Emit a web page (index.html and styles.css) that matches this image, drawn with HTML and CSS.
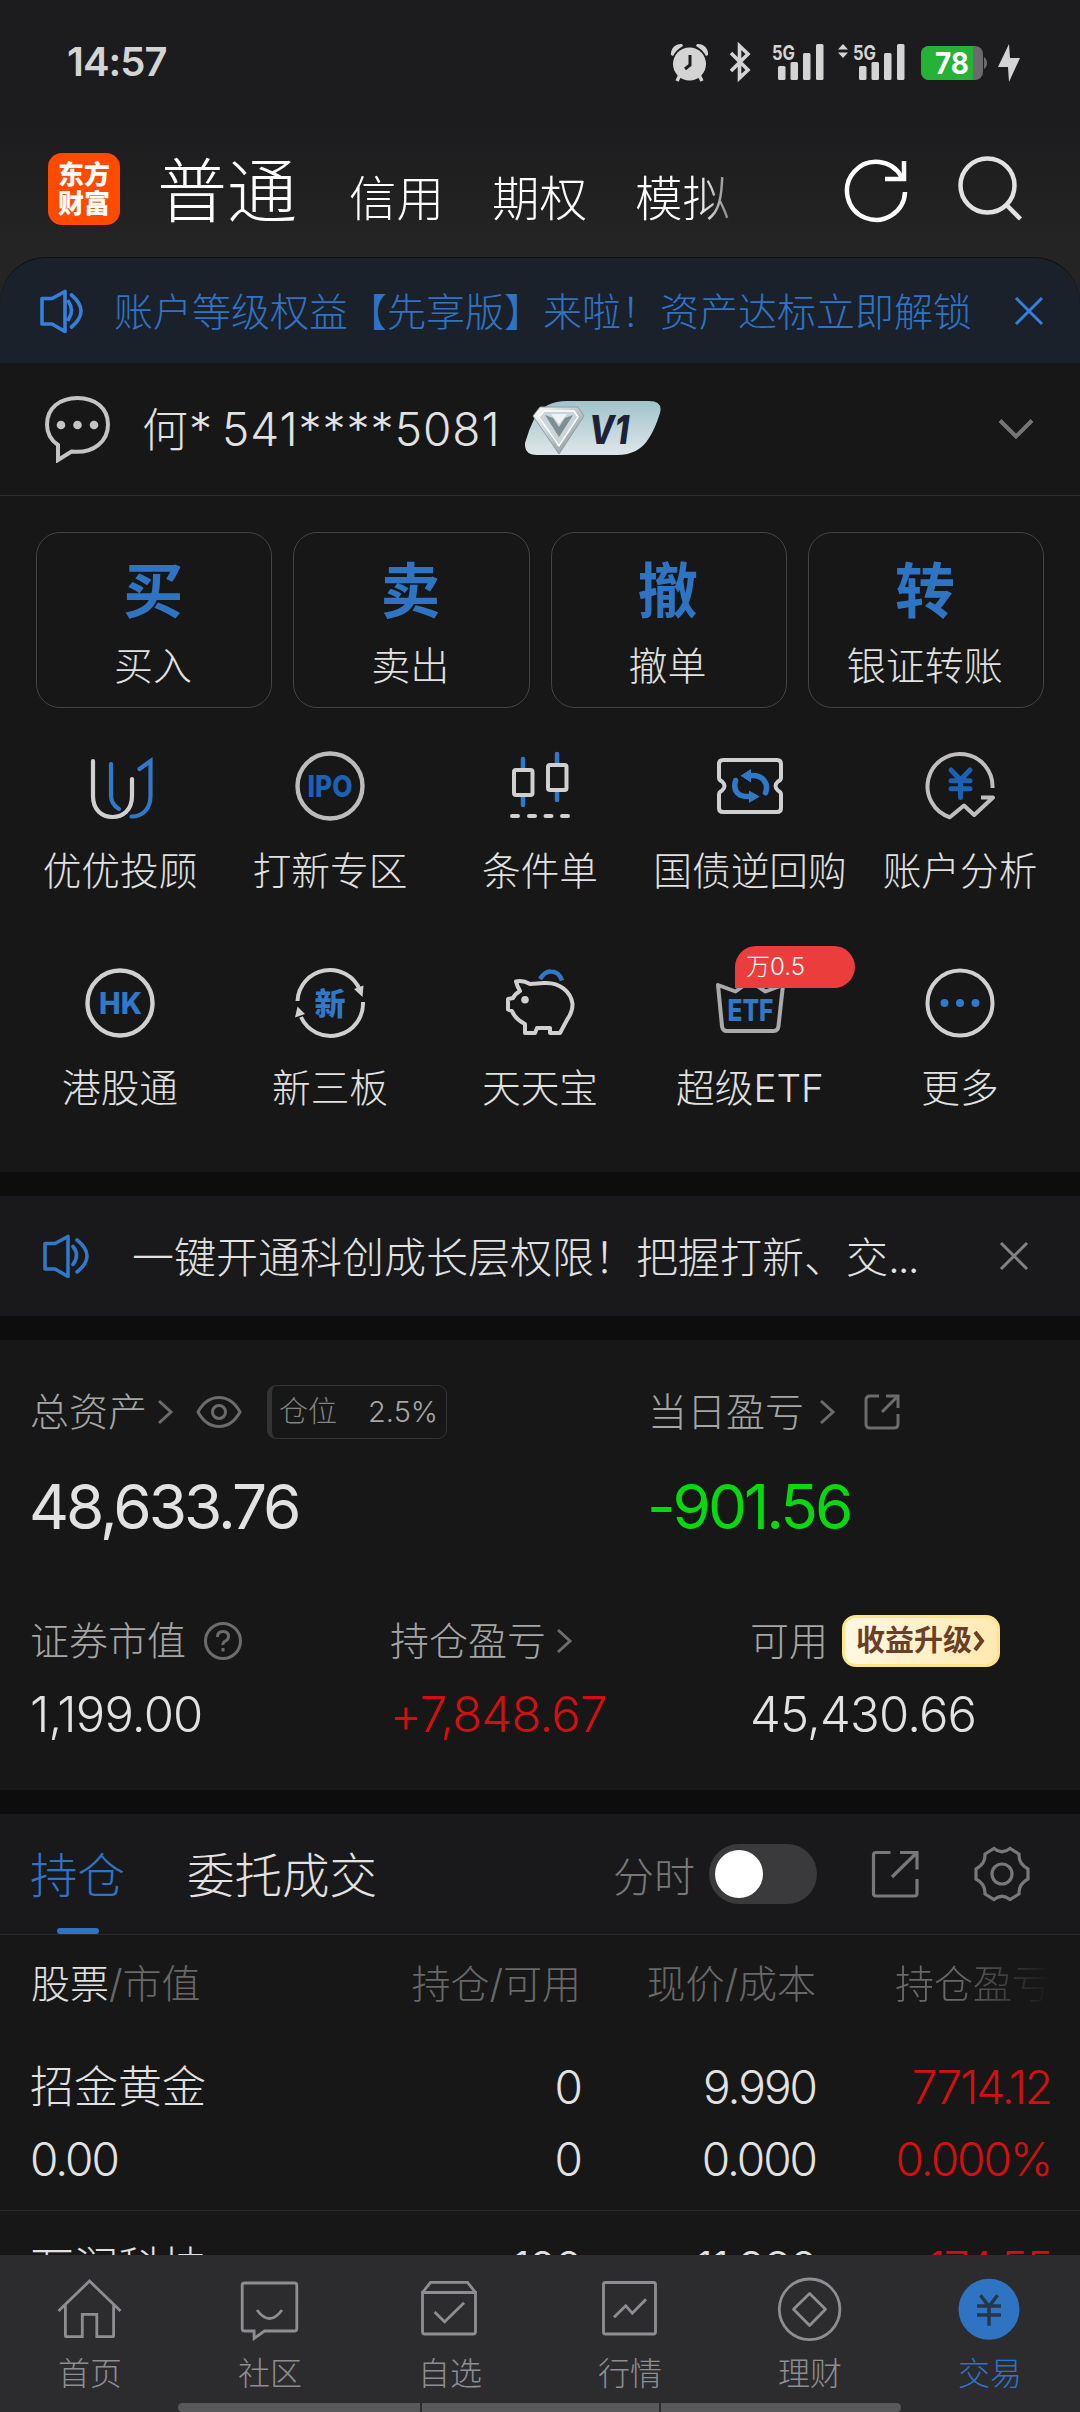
FILE: index.html
```html
<!DOCTYPE html>
<html lang="zh-CN">
<head>
<meta charset="utf-8">
<title>交易</title>
<link rel="stylesheet" href="styles.css">
</head>
<body>
<div class="screen">
  <div class="top">
    <div class="statusbar">
      <span class="time">14:57</span>
      <svg class="st-icons" width="352" height="44" viewBox="670 41 352 44">
        <g fill="#d4d4d4">
          <circle cx="689.500" cy="64" r="16.500"/>
          <path d="M671 55a10 10 0 0 1 11-11l1 2a24 24 0 0 0-10 10zM708 55a10 10 0 0 0-11-11l-1 2a24 24 0 0 1 10 10z"/>
          <path d="M680 75l-3 6M699 75l3 6" stroke="#d4d4d4" stroke-width="3.500"/>
        </g>
        <path d="M690 55v10l-5 4" fill="none" stroke="#1c1c1e" stroke-width="3"/>
        <path d="M731 53l17 17-8.500 8V46l8.500 8-17 17" fill="none" stroke="#d4d4d4" stroke-width="3.600"/>
        <g fill="#d4d4d4">
          <rect x="778" y="66" width="7.500" height="14" rx="1.500"/><rect x="790.500" y="62" width="7.500" height="18" rx="1.500"/><rect x="803" y="53" width="7.500" height="27" rx="1.500"/><rect x="816" y="44" width="7.500" height="36" rx="1.500"/>
          <rect x="859" y="66" width="7.500" height="14" rx="1.500"/><rect x="871.500" y="62" width="7.500" height="18" rx="1.500"/><rect x="884" y="53" width="7.500" height="27" rx="1.500"/><rect x="897" y="44" width="7.500" height="36" rx="1.500"/>
          <path d="M838 49.500l5-5.500 5 5.500zM838 52.500l5 5.500 5-5.500z"/>
        </g>
        <text class="g5" x="772" y="59.500" textLength="23" lengthAdjust="spacingAndGlyphs">5G</text>
        <text class="g5" x="853" y="59.500" textLength="23" lengthAdjust="spacingAndGlyphs">5G</text>
        <rect x="921" y="46" width="62" height="34" rx="8" fill="#6b6b6d"/>
        <path d="M984 57q3 2 3 6t-3 6z" fill="#6b6b6d"/>
        <path d="M929 46h44v34h-44a8 8 0 0 1-8-8v-18a8 8 0 0 1 8-8z" fill="#26b236"/>
        <text class="bat" x="935" y="74" textLength="34" lengthAdjust="spacingAndGlyphs">78</text>
        <path d="M1009 44l-11 23h10l1 15 11-24h-10z" fill="#d4d4d4"/>
      </svg>
    </div>
    <div class="header">
      <div class="logo"><span>东方</span><span>财富</span></div>
      <div class="tabs"><span class="tab-on">普通</span><span>信用</span><span>期权</span><span>模拟</span></div>
      <svg class="refresh" width="66" height="66" viewBox="0 0 66 66" fill="none" stroke="#fff" stroke-width="4.500"><path d="M62 35A29 29 0 1 1 58.500 20"/><path d="M61 4v18H42"/></svg>
      <svg class="search" width="66" height="66" viewBox="0 0 66 66" fill="none" stroke="#e2e2e2" stroke-width="4.500"><circle cx="29.500" cy="29.500" r="27"/><path d="M48.500 49l14 14"/></svg>
    </div>
  </div>
  <div class="promo">
    <svg class="spk" width="44" height="44" viewBox="0 0 44 44"><path d="M2 9.500h10l13-7v40l-13-7.500H2zM28.500 12.500q6 8.500 0 18M31.500 6q19 16 0 32"/></svg>
    <span class="promo-t">账户等级权益【先享版】来啦！资产达标立即解锁</span>
    <svg class="x1" width="30" height="30" viewBox="0 0 30 30"><path d="M2 2l26 26M28 2L2 28"/></svg>
  </div>
  <div class="account">
    <svg width="68" height="68" viewBox="0 0 68 68"><path d="M14 50V65l13.500-8.500C50 59 64 46 64 29.500 64 13 51 3 33.500 3S3 13 3 29.500C3 39 8 46 14 50z" fill="none" stroke="#c4c4c4" stroke-width="4"/><g fill="#c4c4c4"><circle cx="17" cy="30" r="4.300"/><circle cx="33.500" cy="30" r="4.300"/><circle cx="50" cy="30" r="4.300"/></g></svg>
    <span class="acc-t">何* 541****5081</span>
    <svg class="v1" width="138" height="56" viewBox="0 0 138 56">
      <defs><linearGradient id="vb" x1="0" y1="0" x2="0" y2="1"><stop offset="0" stop-color="#a0c3cb"/><stop offset="1" stop-color="#dfe6ea"/></linearGradient>
      <linearGradient id="vd" x1="0" y1="0" x2="1" y2="1"><stop offset="0" stop-color="#ffffff"/><stop offset=".5" stop-color="#b9c6ca"/><stop offset="1" stop-color="#7d8a90"/></linearGradient></defs>
      <path d="M42 0h82q14 0 11 12-5 16-11 25-10 17-32 17H12Q-1 54 0 42q4-14 10-26Q20 0 42 0z" fill="url(#vb)"/>
      <path d="M15 6h38l6 9-25 38L8 15z" fill="url(#vd)" stroke="#8e9ca2"/>
      <path d="M19 10h30l4 6-19 29L14 16z" fill="#c9d5d9" stroke="#fff" stroke-width="1.500"/>
      <path d="M20 14l8 3 6 9 6-9 8-3-14 22z" fill="#7f8e93"/><path d="M26 13l8 10 8-10z" fill="#eef4f6"/>
      <text class="v1t" x="64" y="42.500" textLength="40" lengthAdjust="spacingAndGlyphs">V1</text>
    </svg>
    <svg class="chev" width="36" height="22" viewBox="0 0 36 22"><path d="M2 2.500l16 16 16-16" fill="none" stroke="#757575" stroke-width="4"/></svg>
  </div>
  <div class="cards">
    <div class="card"><b>买</b><span>买入</span></div>
    <div class="card"><b>卖</b><span>卖出</span></div>
    <div class="card"><b>撤</b><span>撤单</span></div>
    <div class="card"><b>转</b><span>银证转账</span></div>
  </div>
  <div class="grid">
    <div class="cell"><svg width="80" height="80" fill="none" stroke-width="4.200" stroke-linecap="round"><path d="M13 15v35c0 14 9 21 19.500 21S52 64 52 50V33" stroke="#d0d0d0"/><path d="M31 18v32q0 8 8 13M59.500 23l11-8v35c0 13-8 20.500-19 20.500" stroke="#3078c8"/></svg><span>优优投顾</span></div>
    <div class="cell"><svg width="80" height="80" fill="none"><circle cx="40" cy="40" r="32.500" stroke="#bcbcbc" stroke-width="4.400"/><text class="it dk" x="17.500" y="51" textLength="45" lengthAdjust="spacingAndGlyphs">IPO</text></svg><span>打新专区</span></div>
    <div class="cell"><svg width="80" height="80" fill="none" stroke-width="4" stroke-linecap="round"><path d="M23 13v9M23 50v9M57 8v9M57 45v9" stroke="#3078c8" stroke-width="4.500"/><g stroke="#d0d0d0"><rect x="14" y="24" width="18.500" height="25" rx="2"/><rect x="48" y="19" width="18.500" height="25" rx="2"/><path d="M12 70h6M29 70h6M45.500 70h6M62 70h6"/></g></svg><span>条件单</span></div>
    <div class="cell"><svg width="80" height="80" fill="none"><path d="M13 14h54q4 0 4 4v14q0 2-3 3.500-5 4.500 0 9 3 1.500 3 4V62q0 4-4 4H13q-4 0-4-4V48.500q0-2.500 3-4 5-4.500 0-9-3-1.500-3-3.500V18q0-4 4-4z" stroke="#d0d0d0" stroke-width="4"/><path d="M40 29.700c13-1.500 19 8 15.500 17M25.600 34.500c-3 10 2 16.500 14 16.100" stroke="#3078c8" stroke-width="5.500" stroke-linecap="round"/><path d="M30.500 29.700L41 23v13.500zM49.700 50.600L39 44.500v12.500z" fill="#3078c8"/></svg><span>国债逆回购</span></div>
    <div class="cell"><svg width="80" height="80" fill="none" stroke="#bfbfbf" stroke-width="4"><path d="M72.500 42A32.500 32.500 0 1 0 29.800 71.300L44 59.500l10.200 9.500L73 51.500H61" stroke-linejoin="round"/><path d="M31 24l9.500 10L50 24M31 34.700h19M31 42.700h19M40.500 34v17.500" stroke="#1b61b4" stroke-width="5" stroke-linecap="round"/></svg><span>账户分析</span></div>
    <div class="cell"><svg width="80" height="80" fill="none"><circle cx="40" cy="40" r="32.500" stroke="#d0d0d0" stroke-width="4.400"/><text class="it" x="19" y="51" textLength="43" lengthAdjust="spacingAndGlyphs">HK</text></svg><span>港股通</span></div>
    <div class="cell"><svg width="80" height="80" fill="none"><path d="M7.500 38A32.500 32.500 0 0 1 70 27M73 39A32.500 32.500 0 0 1 11 54" stroke="#d0d0d0" stroke-width="4"/><path d="M72.500 34l-8.500-8 9.500-3.500zM7.500 43.500L5 54.500l10-3.500z" fill="#d0d0d0"/><text class="it cn" x="40" y="51.500" text-anchor="middle">新</text></svg><span>新三板</span></div>
    <div class="cell"><svg width="80" height="80" fill="none" stroke="#d0d0d0" stroke-width="4"><path d="M16 18.500q7-1.500 14 2.500l14-1c16-1 27 9 28.500 21q0 8-5 15L60 70H50v-5H37l-2 5H25v-9q-10-5-13-13l-4-1.500V36l5-1q2-4 7-7-3-5-4-9.500z" stroke-linejoin="round"/><circle cx="25" cy="36.700" r="3.800" fill="#d0d0d0" stroke="none"/><path d="M40 16q5-8 11-7.500 8 0 11 9" stroke="#3078c8" stroke-width="4.500"/></svg><span>天天宝</span></div>
    <div class="cell etf"><svg width="80" height="80" fill="none"><path d="M8 22l17.500 6.500L40 18l15.500 10.500L73 22l-4.500 41q-.5 5-5 5H17q-4.500 0-5-5z" stroke="#aaa" stroke-width="4" stroke-linejoin="round"/><text class="it" x="17.500" y="57.500" textLength="46" lengthAdjust="spacingAndGlyphs">ETF</text></svg><span>超级ETF</span><em>万0.5</em></div>
    <div class="cell"><svg width="80" height="80" fill="none"><circle cx="40" cy="40" r="32.500" stroke="#d0d0d0" stroke-width="4"/><g fill="#3078c8"><circle cx="24.500" cy="40" r="4"/><circle cx="40" cy="40" r="4"/><circle cx="55.500" cy="40" r="4"/></g></svg><span>更多</span></div>
  </div>
  <div class="notice">
    <svg class="spk n" width="48" height="44" viewBox="0 0 48 44"><path d="M2 9.500h10l13-7v40l-13-7.500H2zM30 12.500q7 8.500 0 18M34 6q20 16 0 32"/></svg>
    <span class="notice-t">一键开通科创成长层权限！把握打新、交<i>...</i></span>
    <svg class="x2" width="30" height="30" viewBox="0 0 30 30"><path d="M2 2l26 26M28 2L2 28"/></svg>
  </div>
  <div class="assets">
    <div class="row a1">
      <div class="half">
        <div class="lab"><span>总资产</span><svg class="gt" width="18" height="26"><path d="M3 2l12 11L3 24"/></svg>
          <svg class="eye" width="46" height="34" viewBox="0 0 46 34"><path d="M2 17Q10 2.500 23 2.500T44 17Q36 31.500 23 31.500T2 17z"/><circle cx="23" cy="17" r="6.500"/></svg>
          <span class="pos"><i>仓位</i><u>2.5%</u></span></div>
        <div class="big">48,633.76</div>
      </div>
      <div class="half">
        <div class="lab"><span>当日盈亏</span><svg class="gt g2" width="18" height="26"><path d="M3 2l12 11L3 24"/></svg>
          <svg class="share" width="38" height="38" viewBox="0 0 38 38"><path d="M16 3H7Q3 3 3 7v24q0 4 4 4h24q4 0 4-4V21M23 3h12v12M34 4L19 19"/></svg></div>
        <div class="big green">-901.56</div>
      </div>
    </div>
    <div class="row a2">
      <div class="third"><div class="lab"><span>证券市值</span><svg class="q" width="40" height="40" viewBox="0 0 40 40"><circle cx="20" cy="20" r="17.500"/><path d="M14.500 16q0-5.500 5.500-5.500t5.500 5q0 3-3 4.500T20 24M20 27v3.500"/></svg></div><div class="val">1,199.00</div></div>
      <div class="third"><div class="lab"><span>持仓盈亏</span><svg class="gt" width="18" height="26"><path d="M3 2l12 11L3 24"/></svg></div><div class="val red">+7,848.67</div></div>
      <div class="third"><div class="lab"><span>可用</span><span class="up"><span>收益升级</span><svg width="14" height="26"><path d="M3 4l7 9-7 9" fill="none" stroke="#6a3f28" stroke-width="4"/></svg></span></div><div class="val">45,430.66</div></div>
    </div>
  </div>
  <div class="ptabs">
    <span class="pt on">持仓</span><span class="pt">委托成交</span>
    <span class="fs">分时</span><span class="toggle"></span>
    <svg class="share2" width="48" height="48" viewBox="0 0 48 48"><path d="M19.500 2.500H5Q2.500 2.500 2.500 5v38.500q0 2.500 2.500 2.500h38.500q2.500 0 2.500-2.500V29M29 2.500h17v17M45 3.500L21 27"/></svg>
    <svg class="gear" width="56" height="56" viewBox="-28 -28 56 56"><path d="M-8-25.500Q0-19 8-25.500L17-20Q16.500-10 26-5V5Q16.500 10 17 20L8 25.500Q0 19-8 25.500L-17 20Q-16.500 10-26 5V-5Q-16.500-10-17-20z"/><circle r="10"/></svg>
  </div>
  <div class="table">
    <div class="tr th"><span><strong>股票</strong>/市值</span><span>持仓/可用</span><span>现价/成本</span><span class="fade">持仓盈亏</span></div>
    <div class="stock">
      <div class="tr"><span class="nm">招金黄金</span><span>0</span><span>9.990</span><span class="red">7714.12</span></div>
      <div class="tr"><span>0.00</span><span>0</span><span>0.000</span><span class="red">0.000%</span></div>
    </div>
    <div class="stock">
      <div class="tr"><span class="nm">万润科技</span><span>100</span><span>11.980</span><span class="red">174.55</span></div>
    </div>
  </div>
  <div class="nav">
    <div><svg width="80" height="80"><path d="M8.500 42l31-30 31 30M15.400 36.500v30q0 1.200 1.200 1.200h15.700V45.300h14.500v22.400h15.600q1.200 0 1.200-1.200v-30"/></svg><span>首页</span></div>
    <div><svg width="80" height="80"><path d="M14.500 14h50q2.300 0 2.300 2.300v43.400q0 2.300-2.300 2.300h-30l-10.400 7.500V62h-9.600q-2.300 0-2.300-2.300V16.300q0-2.300 2.300-2.300zM27 41q12.500 17 25 0"/></svg><span>社区</span></div>
    <div><svg width="80" height="80"><path d="M12.500 23.500h53v39.200q0 2.300-2.300 2.300H14.800q-2.300 0-2.300-2.300zl8-10.200h37l8 10.200M24.600 43l10 9.700 19.500-19"/></svg><span>自选</span></div>
    <div><svg width="80" height="80"><rect x="13.500" y="13.500" width="52" height="51.500" rx="2"/><path d="M24 48.300l11.700-11.600 6.600 7.600L56 30.300"/></svg><span>行情</span></div>
    <div><svg width="80" height="80"><circle cx="39.600" cy="40.300" r="30.300"/><path d="M39.600 24.500L55.500 40.300 39.600 56.500 23.500 40.300z" stroke-linejoin="round"/></svg><span>理财</span></div>
    <div class="cur"><svg width="80" height="80"><circle cx="39" cy="40.300" r="30.500" fill="#2f74c2" stroke="none"/><path d="M30.500 26.300L39 37.500l8.500-11.200M27 37h24M27 46h24M39 37v19.700" stroke="#26374a" stroke-width="3.500"/></svg><span>交易</span></div>
    <div class="homebar"><i></i><i></i><i></i></div>
  </div>
</div>
</body>
</html>
```
FILE: styles.css
```css
* { box-sizing: border-box; }
body { margin: 0; background: #171717; }
.screen { width: 1080px; height: 2412px; overflow: hidden; display: flex; flex-direction: column; background: #0d0d0d; color: #e2e2e2; font-family: Inter, "Noto Sans CJK SC", sans-serif; font-weight: 300; }
.screen > * { flex: none; }
svg { display: block; flex: none; }
i, em, u { font-style: normal; text-decoration: none; }
.red { color: #d30f0f; }
.green { color: #08d80e; }

.top { height: 303px; margin-bottom: -46px; background: linear-gradient(#1c1c1e 0, #1c1c1e 120px, #242424 245px); }
.statusbar { height: 122px; display: flex; align-items: flex-start; justify-content: space-between; padding: 41px 58px 0 67px; }
.time { font-size: 40px; line-height: 42px; font-weight: 600; color: #d4d4d4; letter-spacing: -1px; }
.g5 { font: 700 20px Inter, sans-serif; fill: #d4d4d4; }
.bat { font: 700 30px Inter, sans-serif; fill: #fff; }
.header { height: 135px; display: flex; align-items: flex-start; padding: 31px 55px 0 48px; color: #fff; }
.logo { width: 72px; height: 72px; border-radius: 14px; background: #ff4b00; display: flex; flex-direction: column; align-items: center; justify-content: center; font-size: 26px; line-height: 29px; font-weight: 900; }
.tabs { display: flex; align-items: flex-end; gap: 48px; margin-left: 37px; width: 688px; height: 94px; margin-top: -10px; font-size: 47.5px; line-height: 76px; -webkit-mask-image: linear-gradient(90deg, #000 540px, transparent 600px); mask-image: linear-gradient(90deg, #000 540px, transparent 600px); white-space: nowrap; }
.tab-on { font-size: 70px; line-height: 90px; margin-right: 4px; }
.refresh { margin-top: 4px; margin-left: -2px; }
.search { margin-top: 3px; margin-left: 49px; }

.promo { height: 106px; border-radius: 46px 46px 0 0; border-top: 1px solid #0e0e10; background: #1b212a; display: flex; align-items: center; padding: 0 36px 0 40px; color: #2f74c4; font-size: 39px; }
.spk { fill: none; stroke: #3580dc; stroke-width: 3.6; stroke-linejoin: round; stroke-linecap: round; }
.promo-t { margin-left: 30px; flex: 1; white-space: nowrap; line-height: 60px; margin-top: 2px; }
.x1 { fill: none; stroke: #3580dc; stroke-width: 3; }

.account { height: 133px; background: #171717; border-bottom: 1px solid #2f2f2f; display: flex; align-items: center; padding: 0 46px 0 44px; font-size: 46px; }
.acc-t { margin-left: 30px; white-space: nowrap; width: 383px; line-height: 60px; letter-spacing: 1px; word-spacing: -5px; }
.v1t { font: italic 800 40px Inter, sans-serif; fill: #1e2236; }
.chev { margin-left: auto; }

.cards { background: #171717; display: grid; grid-template-columns: repeat(4, 1fr); gap: 21px; padding: 36px 36px 0; height: 212px; }
.card { border: 1px solid #444; border-radius: 24px; height: 176px; display: flex; flex-direction: column; align-items: center; }
.card b { font-size: 60px; line-height: 70px; margin-top: 23px; color: #2f74c2; font-weight: 700; margin-left: -2px; }
.card span { font-size: 39px; line-height: 50px; margin-top: 15px; margin-left: -2px; }
.grid { background: #171717; height: 464px; padding: 38px 15px 0; display: grid; grid-template-columns: repeat(5, 210px); grid-auto-rows: 217px; }
.cell { display: flex; flex-direction: column; align-items: center; position: relative; font-size: 38.7px; white-space: nowrap; }
.cell > span { line-height: 50px; margin-top: 20px; }
.it { font: 800 30px Inter, sans-serif; fill: #3078c8; }
.it.dk { fill: #1b61b4; }
.it.cn { font: 900 31px "Noto Sans CJK SC", sans-serif; }
.etf em { position: absolute; left: 90px; top: -17px; width: 120px; height: 42px; border-radius: 21px 21px 21px 0; background: #ec3d3d; color: #fff; font-size: 24px; line-height: 42px; padding-left: 11px; }

.notice { margin-top: 24px; height: 120px; background: #19191b; display: flex; align-items: center; padding: 0 51px 0 43px; font-size: 42px; }
.notice-t { flex: 1; margin-left: 41px; white-space: nowrap; line-height: 60px; margin-top: 3px; }
.notice-t i { letter-spacing: -2px; }
.spk.n { stroke: #3078c8; }
.x2 { fill: none; stroke: #828282; stroke-width: 3; }

.assets { margin-top: 24px; height: 450px; background: #171717; }
.row { display: flex; padding-left: 30px; }
.a1 { padding-top: 45px; }
.half { flex: none; width: 618px; }
.third { flex: none; width: 360px; }
.lab { height: 54px; display: flex; align-items: center; font-size: 39px; line-height: 54px; color: #a6a6a6; white-space: nowrap; }
.gt { margin-left: 9px; fill: none; stroke: #6c6c6c; stroke-width: 3; }
.g2 { margin-left: 14px; }
.eye { margin-left: 22px; fill: none; stroke: #6c6c6c; stroke-width: 3; }
.pos { margin-left: 25px; width: 180px; height: 54px; border: 1px solid #333; border-left: 5px solid #333; border-radius: 9px; display: flex; justify-content: space-between; padding: 0 8px 0 7px; font-size: 29px; line-height: 52px; color: #848484; }
.pos u { color: #a6a6a6; }
.big { font-size: 62px; line-height: 80px; margin-top: 28px; font-weight: 400; letter-spacing: -3px; margin-left: -1px; }
.share { margin-left: 27px; fill: none; stroke: #6c6c6c; stroke-width: 3; }
.a2 { padding-top: 67px; }
.q { margin-left: 17px; fill: none; stroke: #6c6c6c; stroke-width: 3; }
.val { font-size: 49px; line-height: 60px; margin-top: 17px; letter-spacing: -0.8px; }
.up { margin-left: 14px; width: 158px; height: 52px; border-radius: 14px; border: 3px solid #ffe48c; background: linear-gradient(100deg, #fff8e4, #ffe9b0); display: flex; align-items: center; justify-content: center; font-size: 29px; font-weight: 700; color: #6a3f28; }

.ptabs { margin-top: 24px; height: 121px; background: #19191b; border-bottom: 1px solid #2a2a2a; display: flex; align-items: center; padding: 0 50px 0 30px; font-size: 47.5px; }
.pt { line-height: 124px; height: 120px; position: relative; white-space: nowrap; }
.pt + .pt { margin-left: 62px; }
.on { color: #2f74c4; }
.on::after { content: ""; position: absolute; left: 27px; bottom: 0; width: 42px; height: 6px; border-radius: 3px; background: #2f74c4; }
.fs { margin-left: auto; font-size: 41px; color: #787878; }
.toggle { margin-left: 14px; width: 108px; height: 60px; border-radius: 30px; background: #3a3a3c; padding: 6px; }
.toggle::before { content: ""; display: block; width: 48px; height: 48px; border-radius: 50%; background: #fff; }
.share2 { margin-left: 54px; fill: none; stroke: #787878; stroke-width: 3.2; }
.gear { margin-left: 55px; fill: none; stroke: #787878; stroke-width: 3.2; }

.table { height: 320px; background: #171717; overflow: hidden; }
.tr { display: grid; grid-template-columns: 315px 235px 235px 235px; padding-left: 30px; font-size: 46px; line-height: 72px; white-space: nowrap; }
.tr span + span { text-align: right; }
.stock .tr { letter-spacing: -2px; grid-template-columns: 316px 235px 235px 235px; }
.th { height: 95px; padding-left: 31px; font-size: 39px; line-height: 98px; color: #686868; }
.th strong { font-weight: 300; color: #e2e2e2; }
.stock .nm { font-size: 44px; letter-spacing: 0; }
.fade { -webkit-mask-image: linear-gradient(90deg, #000 140px, transparent 235px); mask-image: linear-gradient(90deg, #000 140px, transparent 235px); }
.stock { height: 181px; border-bottom: 1px solid #2a2a2a; padding-top: 21px; }

.nav { height: 157px; background: #2c2c2e; display: grid; grid-template-columns: repeat(6, 180px); position: relative; color: #8e8e92; font-size: 32px; }
.nav > div { display: flex; flex-direction: column; align-items: center; padding-top: 14px; }
.nav svg { fill: none; stroke: #8e8e92; stroke-width: 2.8; }
.nav span { line-height: 40px; margin-top: 5px; }
.nav .cur { color: #2f74c4; }
.nav .homebar { position: absolute; left: 178px; bottom: 0; width: 723px; height: 9px; padding: 0; display: grid; grid-template-columns: 242px 237px 240px; gap: 2px; }
.homebar i { display: block; width: 100%; height: 9px; background: #59595b; }
.homebar i:first-child { border-radius: 5px 0 0 5px; }
.homebar i:last-child { border-radius: 0 5px 5px 0; }
```
